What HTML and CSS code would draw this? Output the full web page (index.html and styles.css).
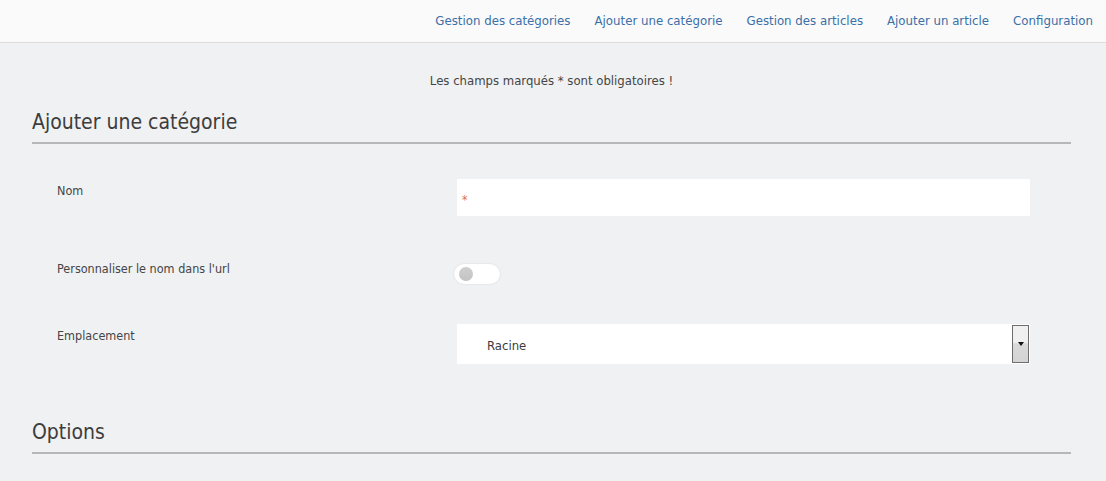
FILE: index.html
```html
<!DOCTYPE html>
<html lang="fr">
<head>
<meta charset="utf-8">
<title>Ajouter une catégorie</title>
<link rel="stylesheet" href="styles.css">
</head>
<body>
<header class="topbar">
  <nav class="nav">
    <a href="#">Gestion des catégories</a>
    <a href="#">Ajouter une catégorie</a>
    <a href="#">Gestion des articles</a>
    <a href="#">Ajouter un article</a>
    <a href="#">Configuration</a>
  </nav>
</header>
<main class="content">
  <p class="notice">Les champs marqués * sont obligatoires !</p>
  <h2 class="section-title">Ajouter une catégorie</h2>
  <div class="form">
    <div class="row row-name">
      <label class="label">Nom</label>
      <div class="field">
        <div class="input"><span class="req">*</span></div>
      </div>
    </div>
    <div class="row row-toggle">
      <label class="label">Personnaliser le nom dans l'url</label>
      <div class="field">
        <span class="toggle"><span class="knob"></span></span>
      </div>
    </div>
    <div class="row row-select">
      <label class="label">Emplacement</label>
      <div class="field">
        <div class="select">
          <span class="select-value">Racine</span>
          <span class="select-btn"><span class="arrow"></span></span>
        </div>
      </div>
    </div>
  </div>
  <h2 class="section-title options">Options</h2>
</main>
</body>
</html>
```

FILE: styles.css
```css
* { box-sizing: border-box; }
html, body { margin: 0; padding: 0; }
body {
  background: #f0f1f3;
  font-family: "DejaVu Sans Condensed", "DejaVu Sans", sans-serif;
  color: #454545;
  height: 481px;
  overflow: hidden;
}
.topbar {
  height: 43px;
  background: #fafafa;
  border-bottom: 1px solid #dcdcdc;
  display: flex;
  justify-content: flex-end;
  align-items: center;
  padding-right: 13px;
}
.nav { display: flex; gap: 24px; padding-bottom: 2px; }
.nav a {
  color: #3a6fa8;
  text-decoration: none;
  font-size: 13.1px;
}
.content { padding: 0 35px 0 32px; }
.notice {
  margin: 0;
  padding-top: 30px;
  text-align: center;
  font-size: 13px;
  line-height: 16px;
  color: #454545;
}
.section-title {
  margin: 0;
  font-weight: normal;
  font-size: 21px;
  line-height: 26px;
  padding-top: 20px;
  padding-bottom: 7px;
  border-bottom: 2px solid #b7b7b7;
  color: #3d3d3d;
}
.section-title.options { padding-top: 0; padding-bottom: 7px; }
.form { padding: 35px 41px 11px 25px; display: flex; flex-direction: column; }
.row { display: flex; align-items: flex-start; }
.label {
  width: 400px;
  flex: none;
  font-size: 12.5px;
  line-height: 16px;
  padding-top: 5px;
}
.field { flex: 1; }
.row-name { height: 81px; }
.row-toggle { height: 64px; padding-top: 4px; }
.row-toggle .label { padding-top: 0; margin-top: -3px; }
.row-select { height: 84px; }
.row-name .label { padding-top: 4px; }
.row-select .label { padding-top: 4px; }
.input {
  height: 37px;
  background: #fff;
  display: flex;
  align-items: center;
  padding-left: 5px;
}
.req { color: #d4705a; font-size: 12px; padding-top: 5px; }
.toggle {
  display: block;
  margin-left: -3px;
  width: 46px;
  height: 20px;
  border-radius: 10px;
  background: #fff;
  box-shadow: 0 0 2px rgba(0,0,0,0.12);
  position: relative;
}
.knob {
  position: absolute;
  left: 5px;
  top: 3px;
  width: 14px;
  height: 14px;
  border-radius: 50%;
  background: linear-gradient(#cfcfcf, #c3c3c3);
}
.select {
  height: 40px;
  background: #fff;
  display: flex;
  align-items: center;
  justify-content: space-between;
  padding-left: 30px;
  padding-right: 1px;
}
.select-value { font-size: 13px; color: #3d3d3d; padding-top: 2px; }
.select-btn {
  width: 17px;
  height: 38px;
  border: 1px solid #6d6d6d;
  background: linear-gradient(#f0f0f0 0%, #f0f0f0 45%, #d9d9d9 50%, #d4d4d4 100%);
  display: flex;
  align-items: center;
  justify-content: center;
}
.arrow {
  width: 0; height: 0;
  border-left: 3.5px solid transparent;
  border-right: 3.5px solid transparent;
  border-top: 4px solid #111;
}
```
